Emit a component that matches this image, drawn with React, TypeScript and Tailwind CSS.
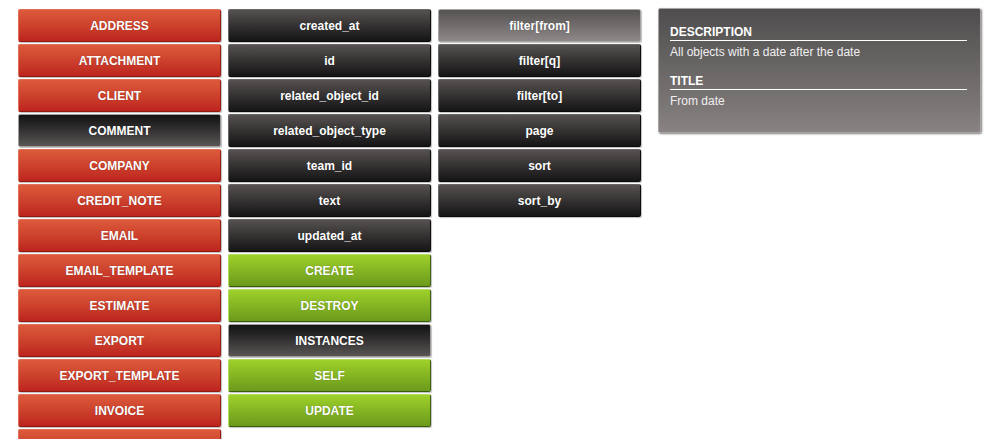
import React from "react";

type Kind = "red" | "dark" | "darkSel" | "graySel" | "green";

const cls: Record<Kind, string> = {
  red: "bg-gradient-to-b from-[#dc5a3b] to-[#bd231e] border border-[#e0705a] border-r-[#9a1c14] border-b-[#8e1a12]",
  dark: "bg-gradient-to-b from-[#575252] to-[#161515] border border-[#6a6666] border-r-[#0c0c0c] border-b-[#0a0a0a]",
  darkSel: "bg-gradient-to-b from-[#131313] to-[#5a5656] border border-[#a09c9c]",
  graySel: "bg-gradient-to-b from-[#575353] to-[#8e8888] border border-[#a9a5a5]",
  green: "bg-gradient-to-b from-[#9ed12a] to-[#6b9a1c] border border-[#b4dc60] border-r-[#3e6010] border-b-[#3a5a0c]",
};

function Btn({ label, kind }: { label: string; kind: Kind }) {
  return (
    <div
      className={`h-[33px] mb-[2px] rounded-[2px] flex items-center justify-center text-white font-bold text-[12px] shadow-[1px_1px_1px_rgba(0,0,0,0.25)] ${cls[kind]}`}
      style={{ textShadow: "0 0 1px rgba(0,0,0,0.35)" }}
    >
      {label}
    </div>
  );
}

export default function App() {
  const col1: [string, Kind][] = [
    ["ADDRESS", "red"],
    ["ATTACHMENT", "red"],
    ["CLIENT", "red"],
    ["COMMENT", "darkSel"],
    ["COMPANY", "red"],
    ["CREDIT_NOTE", "red"],
    ["EMAIL", "red"],
    ["EMAIL_TEMPLATE", "red"],
    ["ESTIMATE", "red"],
    ["EXPORT", "red"],
    ["EXPORT_TEMPLATE", "red"],
    ["INVOICE", "red"],
    ["", "red"],
  ];
  const col2: [string, Kind][] = [
    ["created_at", "dark"],
    ["id", "dark"],
    ["related_object_id", "dark"],
    ["related_object_type", "dark"],
    ["team_id", "dark"],
    ["text", "dark"],
    ["updated_at", "dark"],
    ["CREATE", "green"],
    ["DESTROY", "green"],
    ["INSTANCES", "darkSel"],
    ["SELF", "green"],
    ["UPDATE", "green"],
  ];
  const col3: [string, Kind][] = [
    ["filter[from]", "graySel"],
    ["filter[q]", "dark"],
    ["filter[to]", "dark"],
    ["page", "dark"],
    ["sort", "dark"],
    ["sort_by", "dark"],
  ];
  return (
    <div
      className="w-[995px] h-[439px] overflow-hidden bg-white flex items-start pl-[18px] pt-[9px]"
      style={{ fontFamily: '"Liberation Sans", Arial, sans-serif' }}
    >
      <div className="w-[203px] flex flex-col">
        {col1.map(([l, k], i) => (
          <Btn key={i} label={l} kind={k} />
        ))}
      </div>
      <div className="w-[203px] ml-[7px] flex flex-col">
        {col2.map(([l, k], i) => (
          <Btn key={i} label={l} kind={k} />
        ))}
      </div>
      <div className="w-[203px] ml-[7px] flex flex-col">
        {col3.map(([l, k], i) => (
          <Btn key={i} label={l} kind={k} />
        ))}
      </div>
      <div className="ml-[17px] w-[323px] h-[125px] -mt-[1px] rounded-[2px] border border-[#a8a4a4] bg-gradient-to-b from-[#4f4d4d] to-[#888282] shadow-[1px_1px_2px_rgba(0,0,0,0.5)] pl-[11px] pr-[13px] pt-[16px] text-white">
        <div className="font-bold text-[12px] leading-[14px] border-b border-white pb-[1px]">DESCRIPTION</div>
        <div className="text-[12px] leading-[14px] mt-[4px] text-[#f0f0f0]">All objects with a date after the date</div>
        <div className="font-bold text-[12px] leading-[14px] border-b border-white pb-[1px] mt-[15px]">TITLE</div>
        <div className="text-[12px] leading-[14px] mt-[4px] text-[#f0f0f0]">From date</div>
      </div>
    </div>
  );
}
